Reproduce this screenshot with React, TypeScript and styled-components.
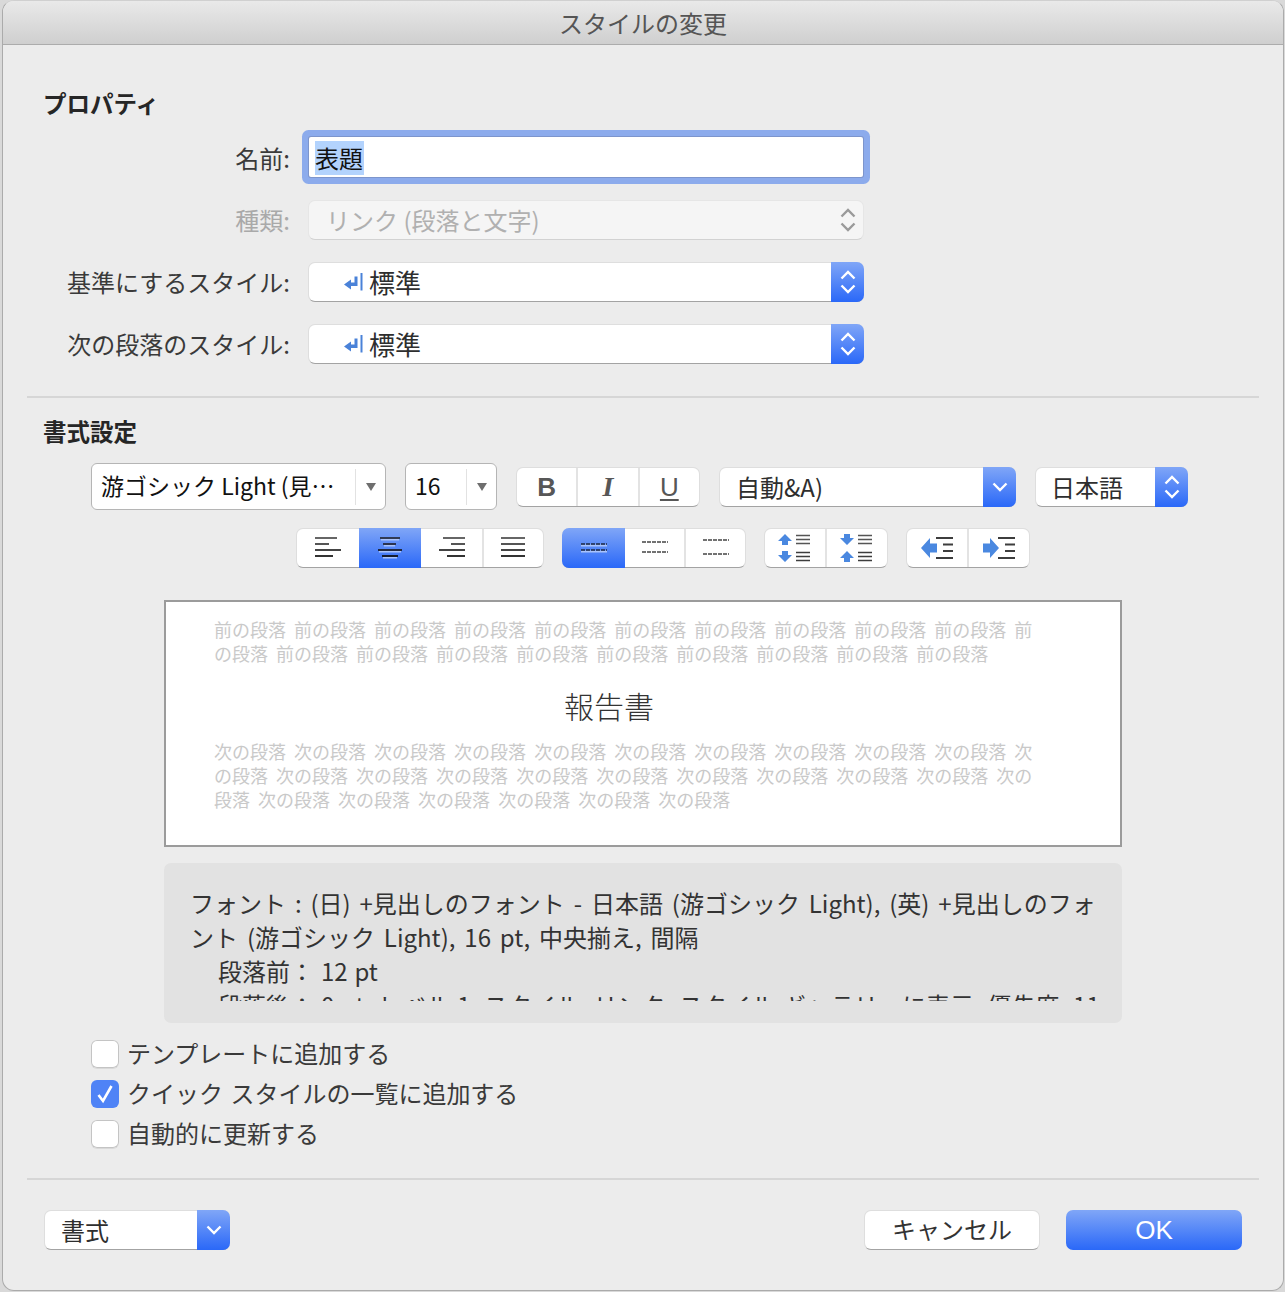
import React from "react";
import styled, { createGlobalStyle, css } from "styled-components";

const GlobalStyle = createGlobalStyle`
  html, body {
    margin: 0;
    padding: 0;
    background: #d9d9d9;
  }
  body {
    font-family: "Noto Sans CJK JP", "Liberation Sans", sans-serif;
    color: #2e2e2e;
  }
`;

const blueFill = css`
  background: linear-gradient(180deg, #80a6f7 0%, #2a68f8 100%);
`;

const raised = css`
  box-sizing: border-box;
  background: #fff;
  border-radius: 7px;
  border: 1px solid rgba(0, 0, 0, 0.13);
  border-bottom-color: rgba(0, 0, 0, 0.36);
`;

const Window = styled.div`
  box-sizing: border-box;
  width: 1282px;
  height: 1291px;
  margin-left: 2px;
  background: #ececec;
  border: 1px solid #ababab;
  border-top-color: #d0d0d0;
  border-radius: 12px;
  overflow: hidden;
`;

const TitleBar = styled.div`
  box-sizing: border-box;
  height: 44px;
  display: flex;
  align-items: center;
  justify-content: center;
  background: linear-gradient(180deg, #e9e9e9 0%, #cfcfcf 100%);
  border-bottom: 1px solid #acacac;
  font-size: 24px;
  color: #555;
`;

const Heading = styled.h2<{ $top: number }>`
  margin: ${(p) => p.$top}px 0 0 40px;
  height: 30px;
  line-height: 28px;
  font-size: 23.5px;
  font-weight: 700;
  color: #262626;
`;

const Divider = styled.hr<{ $top: number }>`
  margin: ${(p) => p.$top}px 24px 0 24px;
  height: 2px;
  border: 0;
  background: #d6d6d6;
`;

const FormGrid = styled.div`
  display: grid;
  grid-template-columns: 246px 556px;
  column-gap: 18px;
  row-gap: 22px;
  margin: 18px 0 0 41px;
  align-items: center;
`;

const FieldLabel = styled.label<{ $muted?: boolean }>`
  text-align: right;
  font-size: 24px;
  line-height: 36px;
  white-space: nowrap;
  color: ${(p) => (p.$muted ? "#a9a9a9" : "#3a3a3a")};
`;

const NameInput = styled.div`
  box-sizing: border-box;
  height: 40px;
  margin: 0 1px 1px;
  padding: 0 6px;
  display: flex;
  align-items: center;
  background: #fff;
  box-shadow: 0 0 0 1px #7d95cc, 0 0 0 7px #8cabec;
  border-radius: 2px;
  font-size: 24px;
  color: #111;
`;

const Selected = styled.span`
  background: #b3d3fd;
  height: 34px;
  line-height: 34px;
  margin-top: 2px;
  padding-right: 1px;
`;

const Select = styled.div<{ $width?: number; $disabled?: boolean }>`
  ${raised}
  display: flex;
  align-items: center;
  height: 40px;
  width: ${(p) => (p.$width ? `${p.$width}px` : "auto")};
  flex: none;
  font-size: 24px;
  ${(p) =>
    p.$disabled &&
    css`
      background: #f5f5f5;
      color: #b0b0b0;
      border-color: rgba(0, 0, 0, 0.06);
      border-bottom-color: rgba(0, 0, 0, 0.14);
    `}
`;

const SelectText = styled.span<{ $left: number; $large?: boolean }>`
  flex: 1;
  padding-left: ${(p) => p.$left}px;
  white-space: nowrap;
  display: flex;
  align-items: center;
  line-height: 36px;
  ${(p) => p.$large && "font-size: 26px;"}
`;

const SelectCap = styled.span<{ $width: number; $disabled?: boolean }>`
  ${(p) => !p.$disabled && blueFill}
  align-self: stretch;
  width: ${(p) => p.$width}px;
  margin: -1px -1px -1px 0;
  border-radius: 0 7px 7px 0;
  flex: none;
  display: flex;
  align-items: center;
  justify-content: center;
`;

const Combo = styled.div<{ $width: number }>`
  ${raised}
  width: ${(p) => p.$width}px;
  height: 47px;
  flex: none;
  display: flex;
  align-items: center;
  font-size: 23px;
  color: #111;
  border-radius: 6px;
  border: 1.5px solid #b5b5b5;
`;

const ComboText = styled.span`
  flex: 1;
  padding: 0 0 4px 9px;
  white-space: nowrap;
  overflow: hidden;
`;

const ComboArrow = styled.span`
  flex: none;
  width: 29px;
  height: 36px;
  border-left: 1px solid #e2e2e2;
  display: flex;
  align-items: center;
  justify-content: center;
  &::before {
    content: "";
    border-left: 5px solid transparent;
    border-right: 5px solid transparent;
    border-top: 8px solid #6e6e6e;
  }
`;

const Toolbar = styled.div<{ $top: number; $left: number; $gap: number }>`
  display: flex;
  align-items: center;
  margin: ${(p) => p.$top}px 0 0 ${(p) => p.$left}px;
  column-gap: ${(p) => p.$gap}px;
`;

const SegmentGroup = styled.div<{ $width: number }>`
  ${raised}
  display: flex;
  width: ${(p) => p.$width}px;
  height: 40px;
  flex: none;
`;

const Segment = styled.div<{ $active?: boolean; $basis?: number }>`
  flex: ${(p) => (p.$basis ? `0 0 ${p.$basis}px` : "1")};
  box-sizing: border-box;
  display: flex;
  align-items: center;
  justify-content: center;
  border-left: 2px solid #e3e3e3;
  &:first-child {
    border-left: 0;
  }
  ${(p) =>
    p.$active &&
    css`
      ${blueFill}
      border-left: 0;
      margin: -1px 0;
      &:first-child {
        margin-left: -1px;
        border-radius: 7px 0 0 7px;
      }
      & + div {
        border-left: 0;
      }
    `}
`;

const StyleLetter = styled.span<{ $italic?: boolean; $under?: boolean }>`
  font-family: "Liberation Sans", sans-serif;
  font-size: 26px;
  line-height: 30px;
  color: #575757;
  font-weight: 700;
  ${(p) =>
    p.$italic &&
    css`
      font-family: "Liberation Serif", serif;
      font-style: italic;
      font-size: 28px;
    `}
  ${(p) =>
    p.$under &&
    css`
      font-weight: 400;
      text-decoration: underline;
      text-underline-offset: 3px;
    `}
`;

const Preview = styled.div`
  box-sizing: border-box;
  width: 958px;
  height: 247px;
  margin: 32px 0 0 161px;
  padding: 15px 0 0 48px;
  background: #fff;
  border: 2px solid #9b9b9b;
`;

const GhostLine = styled.div`
  height: 24px;
  line-height: 24px;
  font-size: 18px;
  word-spacing: 4px;
  white-space: nowrap;
  color: #c9c9c9;
`;

const PreviewTitle = styled.div`
  width: 790px;
  margin: 16px 0 10px;
  height: 48px;
  line-height: 48px;
  text-align: center;
  font-size: 30px;
  font-weight: 300;
  color: #333;
`;

const Summary = styled.div`
  box-sizing: border-box;
  width: 958px;
  height: 160px;
  margin: 16px 0 0 161px;
  padding: 23px 20px 0 26px;
  background: #e2e2e2;
  border-radius: 7px;
`;

const SummaryClip = styled.div`
  height: 115px;
  overflow: hidden;
  font-size: 24px;
  line-height: 34px;
  word-spacing: 3.5px;
  color: #333;
`;

const SummaryIndent = styled.div`
  padding-left: 28px;
  white-space: nowrap;
  word-spacing: 1.5px;
`;

const CheckList = styled.div`
  display: flex;
  flex-direction: column;
  row-gap: 12px;
  margin: 17px 0 0 88px;
`;

const CheckRow = styled.label`
  display: flex;
  align-items: center;
  column-gap: 8px;
  height: 28px;
  font-size: 24px;
  color: #3a3a3a;
  white-space: nowrap;
`;

const CheckLabel = styled.span`
  margin-top: -4px;
  word-spacing: 2px;
`;

const CheckBox = styled.span<{ $checked?: boolean }>`
  box-sizing: border-box;
  width: 28px;
  height: 28px;
  flex: none;
  display: flex;
  align-items: center;
  justify-content: center;
  border-radius: 6px;
  background: ${(p) => (p.$checked ? "#4f83f6" : "#fff")};
  box-shadow: ${(p) =>
    p.$checked ? "none" : "inset 0 0 0 1px #c4c4c4, 0 1px 0 rgba(0,0,0,.08)"};
`;

const Footer = styled.div`
  display: flex;
  align-items: center;
  margin: 30px 41px 0 41px;
`;

const Actions = styled.div`
  margin-left: auto;
  display: flex;
  column-gap: 26px;
`;

const ActionButton = styled.div<{ $primary?: boolean }>`
  ${raised}
  width: 176px;
  height: 40px;
  padding-bottom: 3px;
  display: flex;
  align-items: center;
  justify-content: center;
  font-size: 24px;
  color: #333;
  ${(p) =>
    p.$primary &&
    css`
      ${blueFill}
      border: 0;
      padding-bottom: 0;
      color: #fff;
      font-size: 26px;
      font-family: "Liberation Sans", sans-serif;
    `}
`;

const ReturnSvg = styled.svg`
  margin-right: 6px;
  flex: none;
`;

const Chevrons = ({ color = "#fff" }: { color?: string }) => (
  <svg width="16" height="26" viewBox="0 0 16 26" fill="none">
    <path d="M1.5 9.5 8 3l6.5 6.5M1.5 16.5 8 23l6.5-6.5" stroke={color} strokeWidth="2.4" />
  </svg>
);

const ChevronDown = () => (
  <svg width="16" height="12" viewBox="0 0 16 12" fill="none">
    <path d="M1.5 2.5 8 9l6.5-6.5" stroke="#fff" strokeWidth="2.4" />
  </svg>
);

const ReturnMark = () => (
  <ReturnSvg width="19" height="18" viewBox="0 0 19 18" fill="none">
    <path d="M0 11.5 7 6.5V9.5H10.5V3.5H13.5V13H7V16.5z" fill="#4a82d8" />
    <path d="M17.5 0V17.5" stroke="#4a82d8" strokeWidth="2" />
  </ReturnSvg>
);

const lineColor = (i: number, active?: boolean) =>
  active ? ["#303a55", "#2a3350", "#20283f", "#141c30"][i] : ["#666", "#555", "#444", "#333"][i];

const AlignIcon = ({ lines, active }: { lines: number[][]; active?: boolean }) => (
  <svg width="28" height="22" viewBox="0 0 28 22" fill="none">
    {lines.map(([a, b], i) => (
      <g key={i}>
        {active && <path d={`M${a + 1} ${2.5 + i * 6}H${b - 1}`} stroke="#a9c3fb" strokeWidth="2" />}
        <path d={`M${a} ${1 + i * 6}H${b}`} stroke={lineColor(i, active)} strokeWidth="2" />
      </g>
    ))}
  </svg>
);

const SpacingIcon = ({ rows, active }: { rows: number[]; active?: boolean }) => (
  <svg width="28" height="24" viewBox="0 0 28 24" fill="none">
    {rows.map((y, i) => (
      <g key={i}>
        {active && <path d={`M1 ${y + 1.5}H27`} stroke="#a9c3fb" strokeWidth="2" />}
        <path
          d={`M1 ${y}H27`}
          stroke={active ? "#1d2740" : "#444"}
          strokeWidth="1.6"
          strokeDasharray="4 1"
        />
      </g>
    ))}
  </svg>
);

const upArrow = "M7 0 14 7H10V11H4V7H0z";
const downArrow = "M4 0H10V4H14L7 11 0 4H4z";

const ParaIcon = ({ flip }: { flip?: boolean }) => (
  <svg width="34" height="30" viewBox="0 0 34 30" fill="none">
    <path d={flip ? downArrow : upArrow} fill="#4a88e0" transform="translate(0 1)" />
    <path d={flip ? upArrow : downArrow} fill="#4a88e0" transform="translate(0 18)" />
    <path d="M18 2.5H32M18 6.5H32M18 10.5H32" stroke="#555" strokeWidth="1.6" />
    <path d="M18 19.5H32M18 23.5H32M18 27.5H32" stroke="#3d3d3d" strokeWidth="1.6" />
  </svg>
);

const IndentIcon = ({ right }: { right?: boolean }) => (
  <svg width="32" height="22" viewBox="0 0 32 22" fill="none">
    <path
      d={right ? "M0 6.5H7V1L16 11 7 21V15.5H0z" : "M16 6.5H9V1L0 11 9 21V15.5H16z"}
      fill="#4a88e0"
    />
    <path d="M15 1H32M22 7.5H32M22 14H32M15 21H32" stroke="#3d3d3d" strokeWidth="2" />
  </svg>
);

const Check = () => (
  <svg width="18" height="20" viewBox="0 0 18 20" fill="none">
    <path d="M2.5 11l4.5 6L15.5 2" stroke="#fff" strokeWidth="2.6" />
  </svg>
);

const repeat = (word: string, n: number) => Array(n).fill(word).join(" ");

const App = () => {
  return (
    <>
      <GlobalStyle />
      <Window>
        <TitleBar>スタイルの変更</TitleBar>
        <Heading $top={44}>プロパティ</Heading>
        <FormGrid>
          <FieldLabel>名前:</FieldLabel>
          <NameInput>
            <Selected>表題</Selected>
          </NameInput>
          <FieldLabel $muted>種類:</FieldLabel>
          <Select $disabled>
            <SelectText $left={17}>リンク (段落と文字)</SelectText>
            <SelectCap $width={33} $disabled>
              <Chevrons color="#9a9a9a" />
            </SelectCap>
          </Select>
          <FieldLabel>基準にするスタイル:</FieldLabel>
          <Select>
            <SelectText $left={35} $large>
              <ReturnMark />
              標準
            </SelectText>
            <SelectCap $width={33}>
              <Chevrons />
            </SelectCap>
          </Select>
          <FieldLabel>次の段落のスタイル:</FieldLabel>
          <Select>
            <SelectText $left={35} $large>
              <ReturnMark />
              標準
            </SelectText>
            <SelectCap $width={33}>
              <Chevrons />
            </SelectCap>
          </Select>
        </FormGrid>
        <Divider $top={32} />
        <Heading $top={19}>書式設定</Heading>
        <Toolbar $top={16} $left={88} $gap={19}>
          <Combo $width={295}>
            <ComboText>游ゴシック Light (見⋯</ComboText>
            <ComboArrow />
          </Combo>
          <Combo $width={92}>
            <ComboText>16</ComboText>
            <ComboArrow />
          </Combo>
          <SegmentGroup $width={184}>
            <Segment>
              <StyleLetter>B</StyleLetter>
            </Segment>
            <Segment>
              <StyleLetter $italic>I</StyleLetter>
            </Segment>
            <Segment>
              <StyleLetter $under>U</StyleLetter>
            </Segment>
          </SegmentGroup>
          <Select $width={297}>
            <SelectText $left={16}>自動&amp;A)</SelectText>
            <SelectCap $width={33}>
              <ChevronDown />
            </SelectCap>
          </Select>
          <Select $width={153}>
            <SelectText $left={15}>日本語</SelectText>
            <SelectCap $width={33}>
              <Chevrons />
            </SelectCap>
          </Select>
        </Toolbar>
        <Toolbar $top={18} $left={293} $gap={18}>
          <SegmentGroup $width={248}>
            <Segment $basis={62}>
              <AlignIcon lines={[[1, 23], [1, 15], [1, 27], [1, 19]]} />
            </Segment>
            <Segment $active $basis={62}>
              <AlignIcon active lines={[[4, 24], [7, 20], [2, 26], [6, 22]]} />
            </Segment>
            <Segment $basis={61}>
              <AlignIcon lines={[[5, 27], [13, 27], [1, 27], [9, 27]]} />
            </Segment>
            <Segment>
              <AlignIcon lines={[[1, 25], [1, 25], [1, 25], [1, 25]]} />
            </Segment>
          </SegmentGroup>
          <SegmentGroup $width={184}>
            <Segment $active $basis={63}>
              <SpacingIcon active rows={[8, 14]} />
            </Segment>
            <Segment $basis={59}>
              <SpacingIcon rows={[6, 16]} />
            </Segment>
            <Segment>
              <SpacingIcon rows={[4, 18]} />
            </Segment>
          </SegmentGroup>
          <SegmentGroup $width={124}>
            <Segment>
              <ParaIcon />
            </Segment>
            <Segment>
              <ParaIcon flip />
            </Segment>
          </SegmentGroup>
          <SegmentGroup $width={124}>
            <Segment>
              <IndentIcon />
            </Segment>
            <Segment>
              <IndentIcon right />
            </Segment>
          </SegmentGroup>
        </Toolbar>
        <Preview>
          <GhostLine>{repeat("前の段落", 10)} 前</GhostLine>
          <GhostLine>の段落 {repeat("前の段落", 9)}</GhostLine>
          <PreviewTitle>報告書</PreviewTitle>
          <GhostLine>{repeat("次の段落", 10)} 次</GhostLine>
          <GhostLine>の段落 {repeat("次の段落", 9)} 次の</GhostLine>
          <GhostLine>段落 {repeat("次の段落", 6)}</GhostLine>
        </Preview>
        <Summary>
          <SummaryClip>
            フォント : (日) +見出しのフォント - 日本語 (游ゴシック Light), (英) +見出しのフォ
            <br />
            ント (游ゴシック Light), 16 pt, 中央揃え, 間隔
            <SummaryIndent>段落前： 12 pt</SummaryIndent>
            <SummaryIndent>段落後： 0 pt, レベル 1, スタイル: リンク, スタイル ギャラリーに表示, 優先度: 11</SummaryIndent>
          </SummaryClip>
        </Summary>
        <CheckList>
          <CheckRow>
            <CheckBox />
            <CheckLabel>テンプレートに追加する</CheckLabel>
          </CheckRow>
          <CheckRow>
            <CheckBox $checked>
              <Check />
            </CheckBox>
            <CheckLabel>クイック スタイルの一覧に追加する</CheckLabel>
          </CheckRow>
          <CheckRow>
            <CheckBox />
            <CheckLabel>自動的に更新する</CheckLabel>
          </CheckRow>
        </CheckList>
        <Divider $top={30} />
        <Footer>
          <Select $width={186}>
            <SelectText $left={16}>書式</SelectText>
            <SelectCap $width={33}>
              <ChevronDown />
            </SelectCap>
          </Select>
          <Actions>
            <ActionButton>キャンセル</ActionButton>
            <ActionButton $primary>OK</ActionButton>
          </Actions>
        </Footer>
      </Window>
    </>
  );
};

export default App;
